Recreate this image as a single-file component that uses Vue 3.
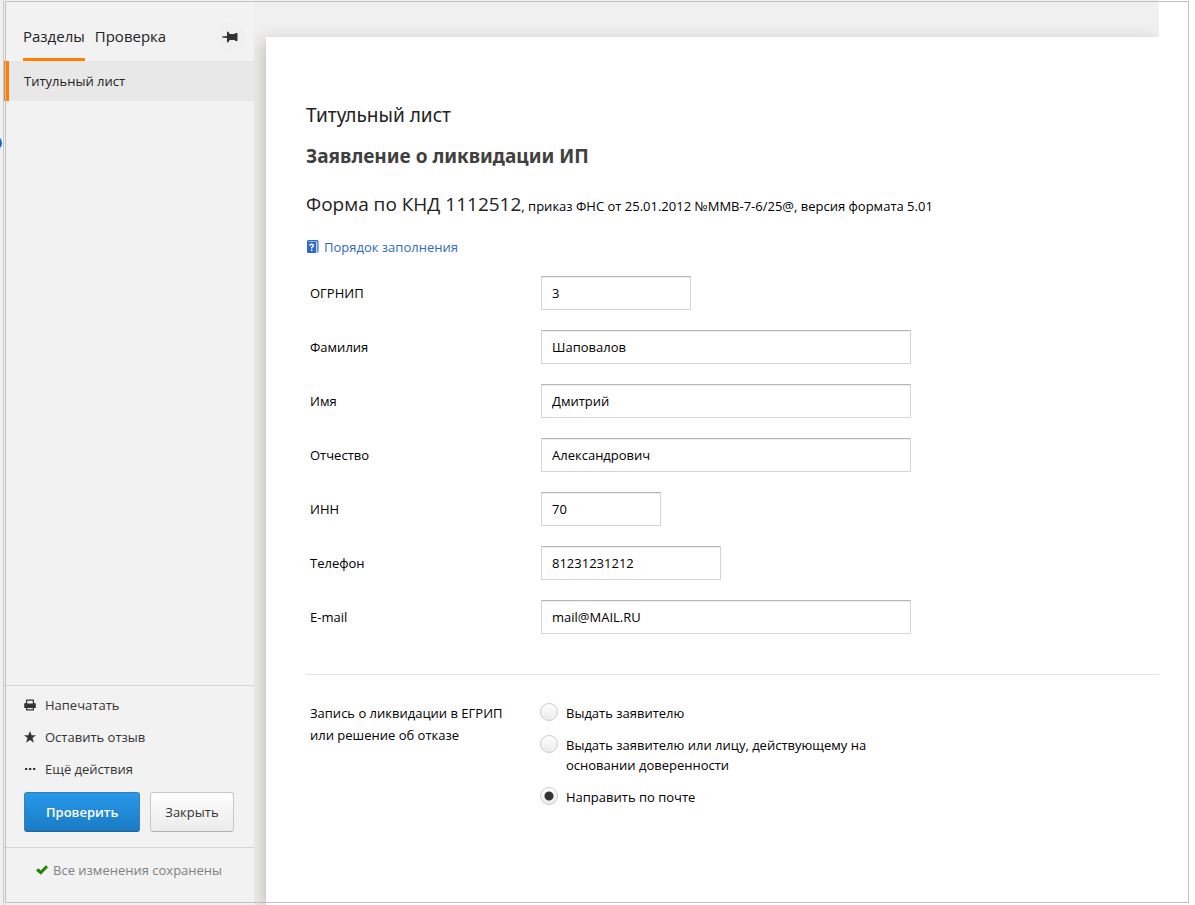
<script setup>
import { ref } from 'vue'

const fields = ref([
  { id: 'ogrnip', label: 'ОГРНИП', value: '3', size: 'm' },
  { id: 'surname', label: 'Фамилия', value: 'Шаповалов', size: 'xl' },
  { id: 'name', label: 'Имя', value: 'Дмитрий', size: 'xl' },
  { id: 'patronymic', label: 'Отчество', value: 'Александрович', size: 'xl' },
  { id: 'inn', label: 'ИНН', value: '70', size: 's' },
  { id: 'phone', label: 'Телефон', value: '81231231212', size: 'l' },
  { id: 'email', label: 'E-mail', value: 'mail@MAIL.RU', size: 'xl' }
])

const options = [
  { id: 'applicant', text: 'Выдать заявителю' },
  { id: 'proxy', text: 'Выдать заявителю или лицу, действующему на основании доверенности' },
  { id: 'post', text: 'Направить по почте' }
]
const delivery = ref('post')
</script>

<template>
  <div class="page">
    <div class="rail"><span class="rail-dot"></span></div>

    <aside class="sidebar">
      <nav class="tabs">
        <button type="button" class="tab active">Разделы</button>
        <button type="button" class="tab">Проверка</button>
        <button type="button" class="pin" aria-label="Закрепить">
          <svg width="16" height="12" viewBox="0 0 16 12">
            <path fill="#333" d="M0 5.500L5 5V1Q5 .5 5.800 .5Q6.800 1 7.300 2.500L8 3H12.500L13.500 2H15.500V10H13.500L12.500 9H8L7.300 9.500Q6.800 11 5.800 11.500Q5 11.500 5 11V7L0 6.500Z" />
          </svg>
        </button>
      </nav>
      <a href="#title" class="section">Титульный лист</a>

      <div class="actions">
        <button type="button" class="action">
          <svg width="12" height="12" viewBox="0 0 12 12">
            <path fill="#333" fill-rule="evenodd" d="M2 1Q2 .5 2.500 .5H9.500Q10 .5 10 1V4H10.500Q11.800 4 11.800 5.300V9H10V11Q10 11.500 9.500 11.500H2.500Q2 11.500 2 11V9H.2V5.300Q.2 4 1.500 4H2ZM3.200 1.700V4.500H8.800V1.700ZM3.200 9V10.300H8.800V9Z" />
          </svg>
          Напечатать
        </button>
        <button type="button" class="action">
          <svg width="12" height="12" viewBox="0 0 12 12">
            <path fill="#333" d="M6 0L7.700 4.200H12L8.500 7L9.900 11.700L6 8.900L2.100 11.700L3.500 7L0 4.200H4.300Z" />
          </svg>
          Оставить отзыв
        </button>
        <button type="button" class="action">
          <svg width="12" height="12" viewBox="0 0 12 12">
            <path fill="#333" d="M1 5H3.300V7H1ZM5 5H7.300V7H5ZM9 5H11.300V7H9Z" />
          </svg>
          Ещё действия
        </button>
        <div class="buttons">
          <button type="button" class="btn primary">Проверить</button>
          <button type="button" class="btn">Закрыть</button>
        </div>
      </div>

      <div class="status">
        <svg width="12" height="10" viewBox="0 0 12 10">
          <path fill="#1f8505" d="M0 5.400L2.300 3.200L4.800 5.500L9.900 .3L12 2.300L4.900 9.700Z" />
        </svg>
        Все изменения сохранены
      </div>
    </aside>

    <main class="stage">
      <form class="sheet" @submit.prevent>
        <h2 id="title" class="kicker">Титульный лист</h2>
        <h1 class="title">Заявление о ликвидации ИП</h1>
        <p class="knd"><span class="knd-code">Форма по КНД 1112512</span>, приказ ФНС от 25.01.2012 №ММВ-7-6/25@, версия формата 5.01</p>
        <a href="#guide" class="guide">
          <svg width="12" height="14" viewBox="0 0 12 14">
            <path fill="#2f6bc4" fill-rule="evenodd" d="M1.500 0H10Q11.500 0 11.500 1.500V12.500H10.300V1.500H1.500V2H9.300V13H1.200Q0 13 0 11.800V1.500Q0 0 1.500 0Z" />
            <path fill="none" stroke="#fff" stroke-width="1.400" d="M2.700 5.600Q2.900 4.300 4.600 4.300Q6.400 4.300 6.400 5.700Q6.400 6.600 4.700 7.400V8.600M4.700 9.500V11" />
          </svg>
          Порядок заполнения
        </a>

        <div class="fields">
          <div v-for="f in fields" :key="f.id" class="row">
            <label :for="f.id" class="label">{{ f.label }}</label>
            <input :id="f.id" v-model="f.value" type="text" class="input" :class="f.size" />
          </div>
        </div>

        <div class="delivery" role="radiogroup" aria-labelledby="delivery-label">
          <div id="delivery-label" class="label">Запись о ликвидации в ЕГРИП<br />или решение об отказе</div>
          <div class="options">
            <label v-for="o in options" :key="o.id" class="option" :for="o.id">
              <input :id="o.id" v-model="delivery" type="radio" name="delivery" :value="o.id" class="radio" />
              <span>{{ o.text }}</span>
            </label>
          </div>
        </div>
      </form>
    </main>

    <div class="frame"></div>
  </div>
</template>

<style>
body {
  margin: 0;
  background: #fff;
}
</style>

<style scoped>
.page {
  position: relative;
  display: flex;
  min-height: 100vh;
  box-sizing: border-box;
  padding-right: 36px;
  overflow: hidden;
  font-family: "Open Sans", "Noto Sans", sans-serif;
  font-size: 13px;
  line-height: 20px;
  color: #000;
}
button,
input {
  font: inherit;
  color: inherit;
}
button {
  margin: 0;
  padding: 0;
  border: 0;
  background: none;
}
a {
  text-decoration: none;
}
svg {
  display: block;
  flex: none;
}
.frame {
  position: absolute;
  inset: 1px 6px 2px 5px;
  border: 1px solid #c1c1c1;
  pointer-events: none;
}
.rail {
  flex: none;
  width: 3px;
  padding-top: 136px;
  background: #f0f0f0;
  border-right: 1px solid #c9c9c9;
  overflow: hidden;
}
.rail-dot {
  display: block;
  width: 14px;
  height: 14px;
  margin-left: -12px;
  border-radius: 50%;
  background: #0a6cd6;
}
.sidebar {
  flex: none;
  display: flex;
  flex-direction: column;
  width: 250px;
  background: #f2f2f2;
}
.tabs {
  display: flex;
  align-items: flex-end;
  gap: 10px;
  height: 61px;
  padding: 0 9px 0 19px;
}
.tab {
  height: 36px;
  padding-bottom: 12px;
  border-bottom: 3px solid transparent;
  box-sizing: border-box;
  font-size: 15px;
  color: #222;
}
.tab.active {
  border-color: #ff8000;
}
.pin {
  display: flex;
  align-items: center;
  justify-content: center;
  width: 30px;
  height: 30px;
  margin: 0 0 9px auto;
  border-radius: 50%;
  background: #f0f0f0;
}
.section {
  padding: 10px 15px;
  border-left: 5px solid #ff8000;
  background: #e8e8e8;
  color: #222;
}
.actions {
  display: flex;
  flex-direction: column;
  align-items: flex-start;
  margin-top: auto;
  padding: 3px 20px 15px;
  border-top: 1px solid #d6d6d6;
}
.action {
  display: flex;
  align-items: center;
  gap: 9px;
  height: 32px;
  color: #333;
}
.buttons {
  display: flex;
  gap: 10px;
  margin-top: 7px;
}
.btn {
  height: 40px;
  padding: 0 14px;
  border: 1px solid #c8c8c8;
  border-bottom-color: #b0b0b0;
  border-radius: 3px;
  background: linear-gradient(#fff, #ebebeb);
  color: #333;
}
.btn.primary {
  padding: 0 21px;
  border-color: #3f7fae #3f7fae #2a6593;
  background: linear-gradient(#2899ea, #1a7bc4);
  color: #fff;
  font-weight: 600;
}
.status {
  display: flex;
  align-items: center;
  gap: 5px;
  height: 58px;
  padding: 0 32px 13px;
  border-top: 1px solid #d6d6d6;
  box-sizing: border-box;
  color: #808080;
  white-space: nowrap;
}
.stage {
  flex: 1;
  display: flex;
  min-width: 0;
  padding: 37px 0 0 12px;
  background: #f0f0f0;
  overflow: hidden;
}
.sheet {
  flex: 1;
  min-width: 0;
  padding: 66px 0 40px 40px;
  background: #fff;
  box-shadow: -4px 4px 16px #c4c1b9;
}
.kicker,
.title,
.knd {
  margin: 0;
  line-height: 24px;
}
.kicker,
.title {
  font-family: "Noto Sans", "Open Sans", sans-serif;
  font-size: 19px;
}
.kicker {
  font-weight: 400;
  color: #222;
}
.title {
  margin-top: 17px;
  font-weight: 700;
  color: #404040;
}
.knd {
  margin-top: 24px;
}
.knd-code {
  font-size: 19px;
  color: #222;
}
.guide {
  display: flex;
  align-items: center;
  gap: 5px;
  width: fit-content;
  margin: 19px 0 0 1px;
  color: #2f6bc4;
}
.fields {
  display: flex;
  flex-direction: column;
  gap: 20px;
  margin-top: 19px;
  padding-bottom: 40px;
  border-bottom: 1px solid #e5e5e5;
}
.row {
  display: flex;
  align-items: center;
}
.label {
  flex: none;
  width: 231px;
  padding-left: 4px;
}
.input {
  width: 100%;
  height: 34px;
  padding: 0 10px;
  border: 1px solid #d5d5d5;
  border-top-color: #b5b5b5;
  box-sizing: border-box;
  background: #fff;
  box-shadow: inset 0 1px 0 #f0f0f0;
  outline: none;
}
.input.s { max-width: 120px; }
.input.m { max-width: 150px; }
.input.l { max-width: 180px; }
.input.xl { max-width: 370px; }
.delivery {
  display: flex;
  margin-top: 27px;
}
.delivery .label {
  width: 230px;
  line-height: 22px;
}
.options {
  display: flex;
  flex-direction: column;
  gap: 12px;
  max-width: 350px;
  padding-top: 1px;
}
.option {
  display: flex;
  align-items: flex-start;
  gap: 8px;
}
.radio {
  appearance: none;
  flex: none;
  width: 18px;
  height: 18px;
  margin: 0;
  border: 1px solid #ccc;
  border-radius: 50%;
  background: linear-gradient(#fff, #ebebeb);
}
.radio:checked {
  background: radial-gradient(circle, #333 0 4px, transparent 5px), linear-gradient(#fff, #ebebeb);
}
</style>
